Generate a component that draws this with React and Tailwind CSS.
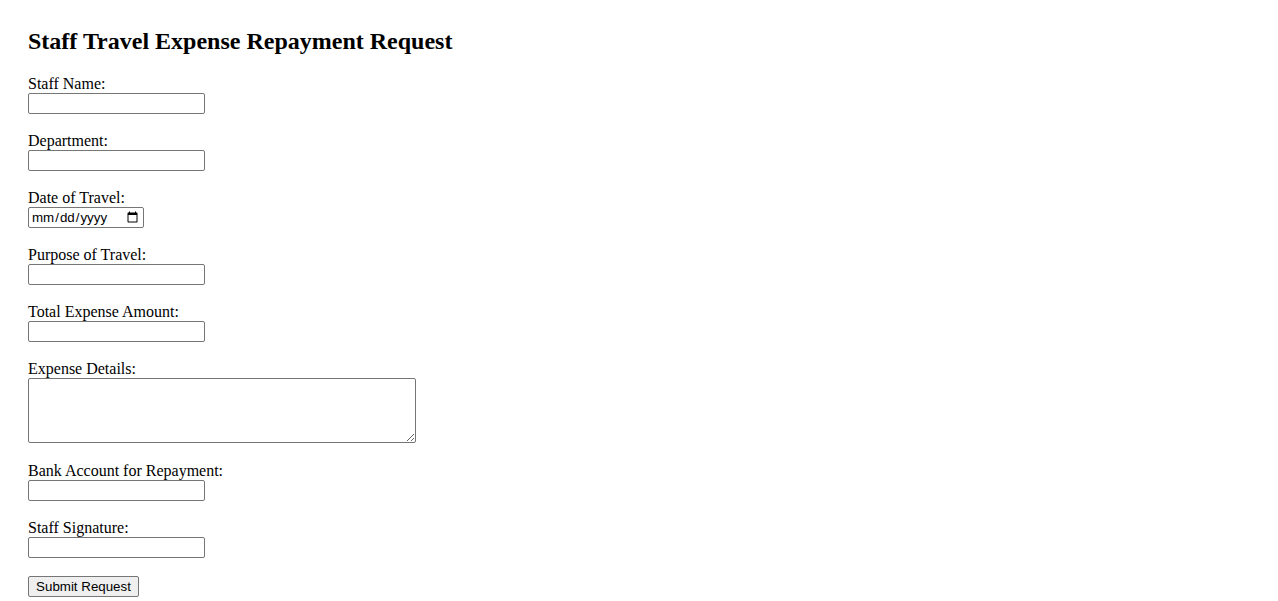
import React from "react";

const fields = [
  { id: "staffName", label: "Staff Name:", type: "text" },
  { id: "department", label: "Department:", type: "text" },
  { id: "travelDate", label: "Date of Travel:", type: "date" },
  { id: "purpose", label: "Purpose of Travel:", type: "text" },
  { id: "amount", label: "Total Expense Amount:", type: "text" },
  { id: "details", label: "Expense Details:", type: "textarea" },
  { id: "bankAccount", label: "Bank Account for Repayment:", type: "text" },
  { id: "signature", label: "Staff Signature:", type: "text" },
];

const inputBase =
  "block h-[21px] border border-[#767676] rounded-[2px] bg-white px-[2px] py-[1px] text-[13.33px] text-black font-['Liberation_Sans',Arial,sans-serif]";

const App = () => {
  return (
    <div className="min-h-screen bg-white text-black font-['Liberation_Serif','Times_New_Roman',serif] pl-[28px] pt-[28px]">
      <h2 className="text-[24px] leading-[27px] font-bold mb-[20px]">Staff Travel Expense Repayment Request</h2>
      <form className="flex flex-col" onSubmit={(e) => e.preventDefault()}>
        {fields.map((f) => (
          <div key={f.id} className={f.type === "textarea" ? "flex flex-col mb-[19px]" : "flex flex-col mb-[18px]"}>
            <label htmlFor={f.id} className="text-[16px] leading-[18px]">
              {f.label}
            </label>
            {f.type === "textarea" ? (
              <textarea
                id={f.id}
                className="block h-[65px] w-[388px] border border-[#767676] rounded-[2px] bg-white p-[2px] text-[13.33px] font-['Liberation_Mono',monospace] resize"
              />
            ) : f.type === "date" ? (
              <input id={f.id} type="date" className={`${inputBase} w-[116px]`} />
            ) : (
              <input id={f.id} type="text" className={`${inputBase} w-[177px]`} />
            )}
          </div>
        ))}
        <div className="flex">
          <button
            type="submit"
            className="h-[21px] w-[111px] border border-[#767676] rounded-[2px] bg-[#efefef] px-[6px] text-[13.33px] leading-[15px] text-black font-['Liberation_Sans',Arial,sans-serif]"
          >
            Submit Request
          </button>
        </div>
      </form>
    </div>
  );
};

export default App;
